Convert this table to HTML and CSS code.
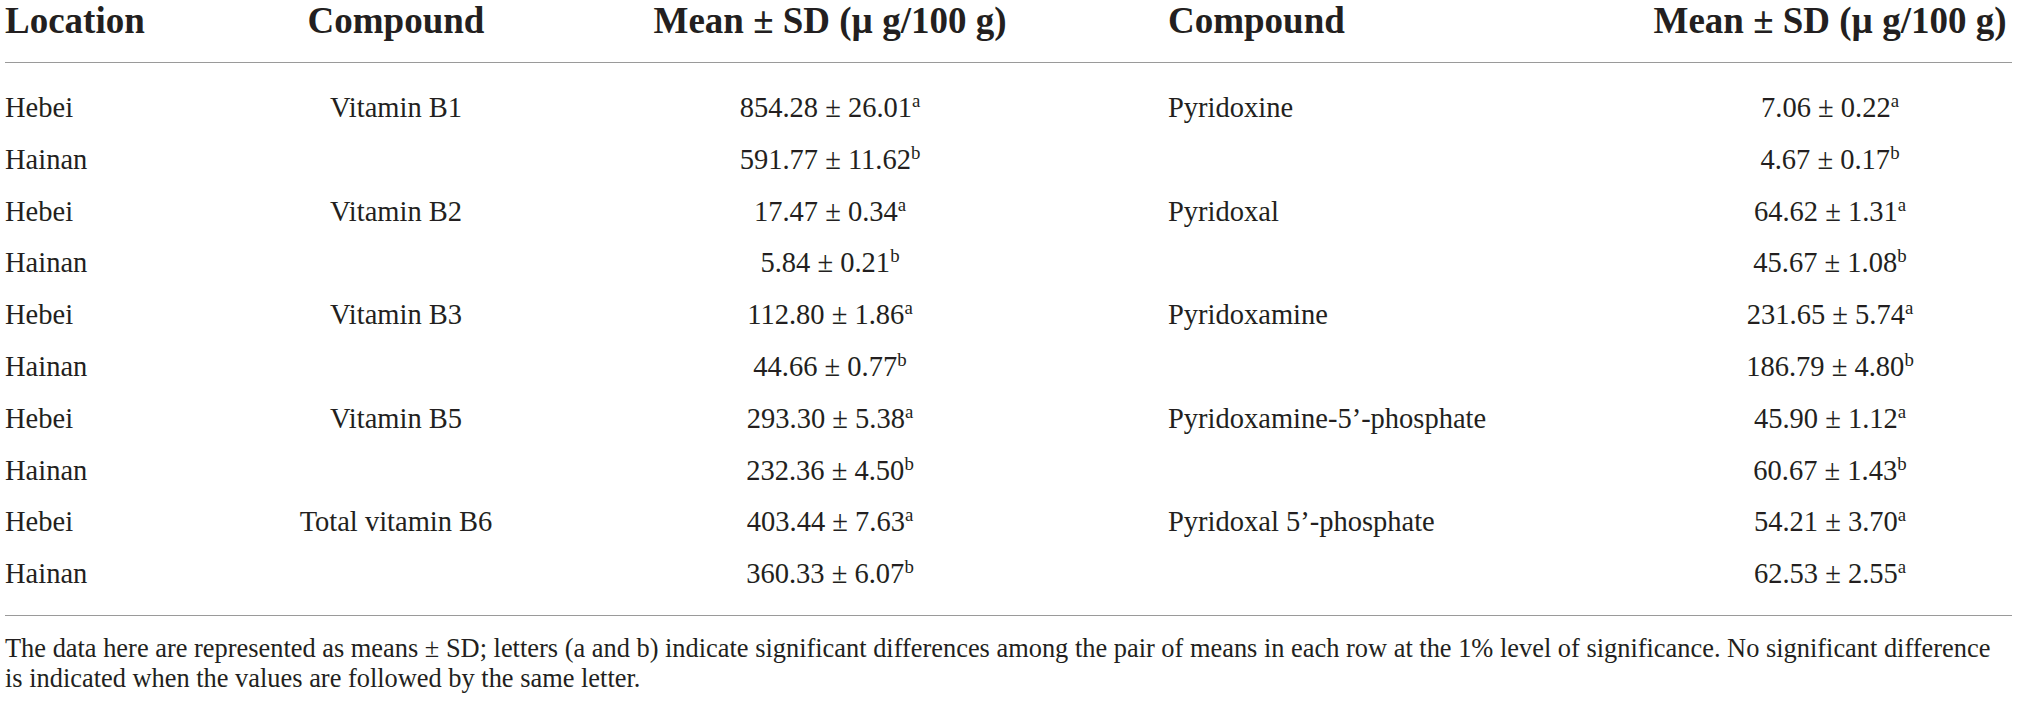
FILE: index.html
```html
<!DOCTYPE html>
<html lang="en">
<head>
    <meta charset="UTF-8">
    <title>B vitamins by location</title>
    <link rel="stylesheet" href="styles.css">
</head>
<body>
    <div class="table-wrap">
        <table class="vit-table">
            <colgroup>
                <col class="c-loc">
                <col class="c-cmp">
                <col class="c-val">
                <col class="c-cmp2">
                <col class="c-val2">
            </colgroup>
            <thead>
                <tr>
                    <th class="loc">Location</th>
                    <th class="cmp">Compound</th>
                    <th class="val">Mean ± SD (µ g/100 g)</th>
                    <th class="cmp2">Compound</th>
                    <th class="val">Mean ± SD (µ g/100 g)</th>
                </tr>
            </thead>
            <tbody>
                <tr>
                    <td class="loc">Hebei</td>
                    <td class="cmp">Vitamin B1</td>
                    <td class="val">854.28 ± 26.01<sup>a</sup></td>
                    <td class="cmp2">Pyridoxine</td>
                    <td class="val">7.06 ± 0.22<sup>a</sup></td>
                </tr>
                <tr>
                    <td class="loc">Hainan</td>
                    <td class="cmp"></td>
                    <td class="val">591.77 ± 11.62<sup>b</sup></td>
                    <td class="cmp2"></td>
                    <td class="val">4.67 ± 0.17<sup>b</sup></td>
                </tr>
                <tr>
                    <td class="loc">Hebei</td>
                    <td class="cmp">Vitamin B2</td>
                    <td class="val">17.47 ± 0.34<sup>a</sup></td>
                    <td class="cmp2">Pyridoxal</td>
                    <td class="val">64.62 ± 1.31<sup>a</sup></td>
                </tr>
                <tr>
                    <td class="loc">Hainan</td>
                    <td class="cmp"></td>
                    <td class="val">5.84 ± 0.21<sup>b</sup></td>
                    <td class="cmp2"></td>
                    <td class="val">45.67 ± 1.08<sup>b</sup></td>
                </tr>
                <tr>
                    <td class="loc">Hebei</td>
                    <td class="cmp">Vitamin B3</td>
                    <td class="val">112.80 ± 1.86<sup>a</sup></td>
                    <td class="cmp2">Pyridoxamine</td>
                    <td class="val">231.65 ± 5.74<sup>a</sup></td>
                </tr>
                <tr>
                    <td class="loc">Hainan</td>
                    <td class="cmp"></td>
                    <td class="val">44.66 ± 0.77<sup>b</sup></td>
                    <td class="cmp2"></td>
                    <td class="val">186.79 ± 4.80<sup>b</sup></td>
                </tr>
                <tr>
                    <td class="loc">Hebei</td>
                    <td class="cmp">Vitamin B5</td>
                    <td class="val">293.30 ± 5.38<sup>a</sup></td>
                    <td class="cmp2">Pyridoxamine-5’-phosphate</td>
                    <td class="val">45.90 ± 1.12<sup>a</sup></td>
                </tr>
                <tr>
                    <td class="loc">Hainan</td>
                    <td class="cmp"></td>
                    <td class="val">232.36 ± 4.50<sup>b</sup></td>
                    <td class="cmp2"></td>
                    <td class="val">60.67 ± 1.43<sup>b</sup></td>
                </tr>
                <tr>
                    <td class="loc">Hebei</td>
                    <td class="cmp">Total vitamin B6</td>
                    <td class="val">403.44 ± 7.63<sup>a</sup></td>
                    <td class="cmp2">Pyridoxal 5’-phosphate</td>
                    <td class="val">54.21 ± 3.70<sup>a</sup></td>
                </tr>
                <tr>
                    <td class="loc">Hainan</td>
                    <td class="cmp"></td>
                    <td class="val">360.33 ± 6.07<sup>b</sup></td>
                    <td class="cmp2"></td>
                    <td class="val">62.53 ± 2.55<sup>a</sup></td>
                </tr>
            </tbody>
        </table>
        <p class="table-note">The data here are represented as means ± SD; letters (a and b) indicate significant differences among the pair of means in each row at the 1% level of significance. No significant difference is indicated when the values are followed by the same letter.</p>
    </div>
</body>
</html>
```

FILE: styles.css
```css
body { margin: 0; background: #fff; color: #231f20; font-family: "Liberation Serif", "Times New Roman", serif; }
.table-wrap { padding: 0 5px; width: 2009px; }

.vit-table { width: 2007px; border-collapse: collapse; table-layout: fixed; }
.c-loc { width: 260px; }
.c-cmp { width: 262px; }
.c-val { width: 606px; }
.c-cmp2 { width: 515px; }
.c-val2 { width: 364px; }

.vit-table th {
    font-size: 37px; line-height: 42px; font-weight: bold; padding: 0 0 20px; white-space: nowrap;
    border-bottom: 1px solid #9a9a9a;
}
.vit-table td { font-size: 28.5px; line-height: 51.8px; padding: 0; white-space: nowrap; }
.vit-table tbody tr:first-child td { padding-top: 19px; }
.vit-table tbody tr:last-child td { padding-bottom: 15px; border-bottom: 1px solid #9a9a9a; }

.loc { text-align: left; }
.cmp { text-align: center; }
.val { text-align: center; }
.cmp2 { text-align: left; padding-left: 35px !important; }

sup { font-size: 0.66em; line-height: 0; vertical-align: 0.55em; }

.table-note { margin: 17px 0 0; font-size: 26.4px; line-height: 30px; }
```
